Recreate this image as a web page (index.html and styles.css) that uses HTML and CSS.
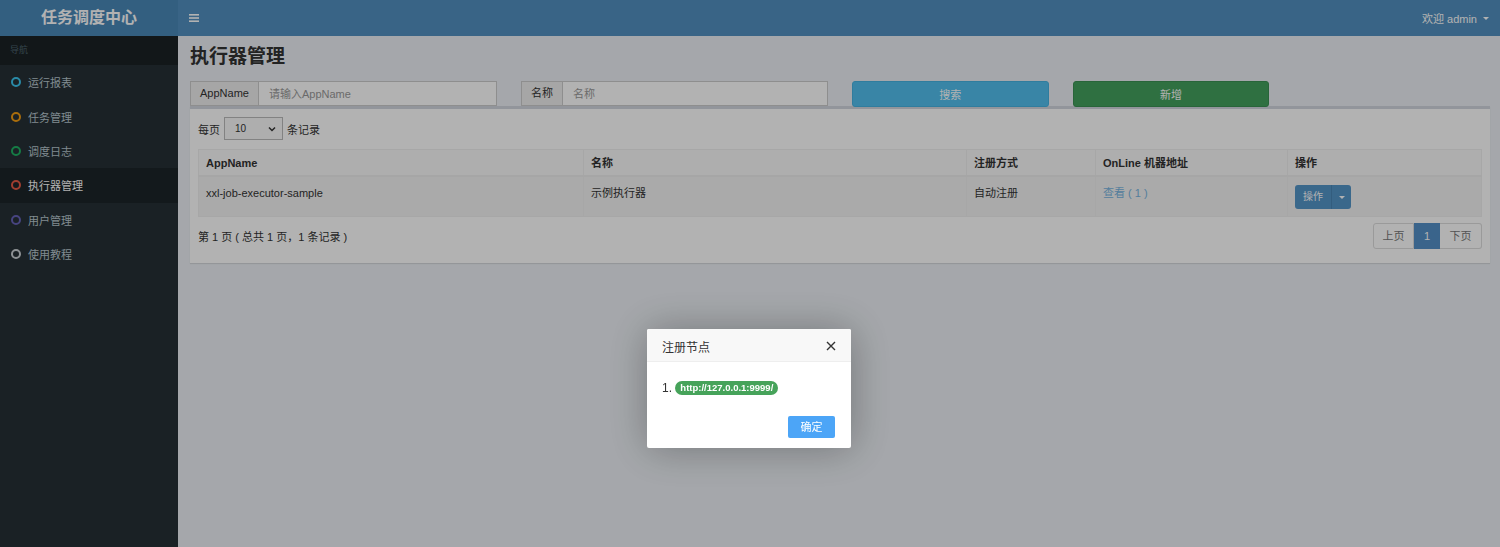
FILE: index.html
```html
<!DOCTYPE html>
<html lang="zh-CN">
<head>
<meta charset="utf-8">
<title>执行器管理</title>
<link rel="stylesheet" href="styles.css">
</head>
<body>
<header class="main-header">
  <div class="logo">任务调度中心</div>
  <nav class="navbar">
    <span class="toggle">
      <svg width="10" height="8" viewBox="0 0 10 8"><rect x="0" y="0" width="10" height="1.6" fill="#fff"/><rect x="0" y="3.2" width="10" height="1.6" fill="#fff"/><rect x="0" y="6.4" width="10" height="1.6" fill="#fff"/></svg>
    </span>
    <span class="user">欢迎 admin <span class="caret"></span></span>
  </nav>
</header>
<div class="wrapper">
  <aside class="sidebar">
    <div class="nav-header">导航</div>
    <ul class="menu">
      <li><i class="dot aqua"></i><span>运行报表</span></li>
      <li><i class="dot yellow"></i><span>任务管理</span></li>
      <li><i class="dot green"></i><span>调度日志</span></li>
      <li class="active"><i class="dot red"></i><span>执行器管理</span></li>
      <li><i class="dot purple"></i><span>用户管理</span></li>
      <li><i class="dot gray"></i><span>使用教程</span></li>
    </ul>
  </aside>
  <main class="content">
    <h1 class="page-title">执行器管理</h1>
    <div class="filters">
      <div class="input-group span3"><span class="addon">AppName</span><input class="field" type="text" placeholder="请输入AppName"></div>
      <div class="input-group span3"><span class="addon">名称</span><input class="field" type="text" placeholder="名称"></div>
      <button class="btn btn-search span2">搜索</button>
      <button class="btn btn-add span2">新增</button>
    </div>
    <div class="box">
      <div class="length">
        <span>每页</span>
        <span class="select">10<svg width="8" height="6" viewBox="0 0 8 6"><path d="M1 1.5 L4 4.5 L7 1.5" fill="none" stroke="#333" stroke-width="1.5"/></svg></span>
        <span>条记录</span>
      </div>
      <table class="grid">
        <colgroup><col class="c1"><col class="c2"><col class="c3"><col class="c4"><col class="c5"></colgroup>
        <thead>
          <tr><th>AppName</th><th>名称</th><th>注册方式</th><th>OnLine 机器地址</th><th>操作</th></tr>
        </thead>
        <tbody>
          <tr>
            <td>xxl-job-executor-sample</td>
            <td>示例执行器</td>
            <td>自动注册</td>
            <td><a class="link">查看 ( 1 )</a></td>
            <td><span class="split"><span class="split-main">操作</span><span class="split-caret"><span class="caret"></span></span></span></td>
          </tr>
        </tbody>
      </table>
      <div class="footer">
        <span class="info">第 1 页 ( 总共 1 页，1 条记录 )</span>
        <ul class="pager">
          <li class="prev">上页</li>
          <li class="cur">1</li>
          <li class="next">下页</li>
        </ul>
      </div>
    </div>
  </main>
</div>
<div class="shade"></div>
<div class="layer">
  <div class="layer-title">注册节点
    <svg class="close" width="10" height="10" viewBox="0 0 10 10"><path d="M1 1 L9 9 M9 1 L1 9" stroke="#333" stroke-width="1.4" fill="none"/></svg>
  </div>
  <div class="layer-body">1. <span class="badge">http://127.0.0.1:9999/</span></div>
  <div class="layer-btns"><span class="btn-ok">确定</span></div>
</div>
</body>
</html>
```
FILE: styles.css
```css
* { box-sizing: border-box; }
html, body { margin: 0; padding: 0; height: 100%; }
body {
  font-family: "Liberation Sans", "Noto Sans CJK SC", sans-serif;
  font-size: 11px;
  color: #333;
  background: #ecf0f5;
  overflow: hidden;
}
.main-header { display: flex; height: 36px; }
.logo {
  width: 178px; flex: none;
  background: #4a89b8;
  color: #fff;
  font-size: 16px; font-weight: bold;
  text-align: center; line-height: 36px;
}
.navbar {
  flex: 1; background: #5290c0;
  display: flex; align-items: center; justify-content: space-between;
  padding: 0 11px;
  color: #fff;
}
.toggle { display: flex; align-items: center; }
.user { font-size: 11px; display: flex; align-items: center; }
.caret {
  display: inline-block; width: 0; height: 0;
  border-left: 3px solid transparent; border-right: 3px solid transparent;
  border-top: 3px solid #fff;
}
.user .caret { margin-left: 6px; }
.wrapper { display: flex; height: calc(100% - 36px); }
.sidebar { width: 178px; flex: none; background: #263035; }
.nav-header {
  height: 29px; line-height: 29px;
  background: #1a2124; color: #4b646f;
  font-size: 9px; padding-left: 10px;
}
.menu { list-style: none; margin: 0; padding: 0; }
.menu li {
  height: 34.4px; display: flex; align-items: center;
  color: #b8c7ce; padding-left: 11px;
}
.menu li.active { background: #1c2529; color: #fff; }
.dot {
  width: 10px; height: 10px; border-radius: 50%;
  border: 2px solid; margin-right: 7px; flex: none;
}
.aqua { border-color: #3cc6f0; }
.yellow { border-color: #f39c12; }
.green { border-color: #1fb163; }
.red { border-color: #e45a45; }
.purple { border-color: #6662b8; }
.gray { border-color: #cbd0d5; }
.content { flex: 1; padding: 8px 12px 0; }
.page-title {
  margin: 0; font-size: 19px; line-height: 26px; font-weight: 600;
}
.filters {
  margin-top: 11px;
  display: grid; grid-template-columns: repeat(12, 1fr); column-gap: 24px;
  height: 25px;
}
.span3 { grid-column: span 3; }
.span2 { grid-column: span 2; }
.input-group { display: flex; height: 25px; }
.addon {
  background: #eee; border: 1px solid #ccc;
  padding: 0 9px; line-height: 23px; color: #333;
}
.field {
  flex: 1; min-width: 0; border: 1px solid #ccc; border-left: 0;
  padding: 0 10px; font: inherit; background: #fff; height: 25px;
}
.field::placeholder { color: #999; }
.btn {
  height: 26px; border-radius: 3px; color: #fff;
  font: inherit; font-size: 11px; cursor: pointer;
}
.btn-search { background: #52bfee; border: 1px solid #46b3e2; }
.btn-add { background: #44a15e; border: 1px solid #3b9154; }
.box {
  background: #fff; border-top: 3px solid #d2d6de;
  padding: 8px 8px 8px;
  box-shadow: 0 1px 1px rgba(0,0,0,.1);
  margin-top: 0;
}
.length { display: flex; align-items: center; gap: 4px; height: 23px; }
.select {
  width: 59px; height: 23px; border: 1px solid #bbb; background: #f9f9f9;
  display: flex; align-items: center; justify-content: space-between;
  padding: 0 6px 0 10px; font-size: 10px;
}
.grid {
  width: 100%; margin-top: 9px;
  border-collapse: collapse; table-layout: fixed;
}
.c1 { width: 385px; } .c2 { width: 383px; } .c3 { width: 129px; } .c4 { width: 192px; } .c5 { width: 194px; }
.grid th, .grid td {
  border: 1px solid #f0f0f0; text-align: left; vertical-align: top;
}
.grid th { padding: 7px 7px 6px; line-height: 12px; background: #f9f9f9; font-weight: bold; border-bottom: 2px solid #eee; }
.grid td { padding: 8px 7px 7px; line-height: 17px; background: #f4f4f4; }
.link { color: #78b4e0; }
.split { display: inline-flex; height: 24px; border-radius: 3px; overflow: hidden; color: #fff; }
.split-main { background: #5395c8; width: 36px; text-align: center; line-height: 24px; font-size: 10px; }
.split-caret {
  background: #5395c8; width: 20px; border-left: 1px solid #4a86b5;
  display: flex; align-items: center; justify-content: center;
}
.footer { display: flex; justify-content: space-between; align-items: center; margin: 6px 0 6px; }
.pager { list-style: none; margin: 0; padding: 0; display: flex; }
.pager li {
  height: 26px; line-height: 24px; border: 1px solid #ddd; text-align: center; color: #777;
}
.pager .prev { width: 41px; border-radius: 3px 0 0 3px; }
.pager .cur { width: 26px; background: #5390c8; border-color: #5390c8; color: #fff; }
.pager .next { width: 42px; border-left: 0; border-radius: 0 3px 3px 0; }
.shade { position: fixed; inset: 0; background: rgba(0,0,0,.3); }
.layer {
  position: fixed; left: 647px; top: 329px; width: 204px; height: 119px;
  background: #fff; box-shadow: 1px 1px 40px rgba(0,0,0,.3);
  border-radius: 2px;
}
.layer-title {
  height: 33px; padding: 2px 15px 0;
  background: #f8f8f8; border-bottom: 1px solid #eee;
  font-size: 12px; color: #333;
  display: flex; justify-content: space-between; align-items: center;
  border-radius: 2px 2px 0 0;
}
.layer-body { padding: 18px 15px 0; line-height: 17px; font-size: 12px; height: 52px; }
.badge {
  display: inline-block; background: #46a35a; color: #fff;
  font-size: 9.5px; font-weight: bold; line-height: 13.5px;
  padding: 0 5px; border-radius: 7px; vertical-align: 1px;
}
.layer-btns { display: flex; justify-content: flex-end; padding: 2px 16px 0; }
.btn-ok {
  width: 47px; height: 22px; line-height: 22px; text-align: center;
  background: #4ca5f7; color: #fff; font-size: 11px; border-radius: 2px;
}
```
